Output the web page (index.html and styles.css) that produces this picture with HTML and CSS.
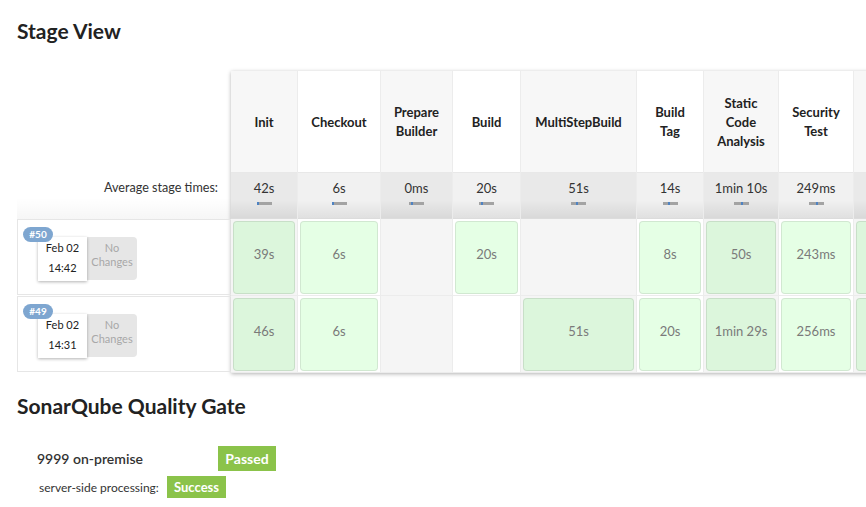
FILE: index.html
```html
<!DOCTYPE html>
<html>
<head>
<meta charset="utf-8">
<link rel="stylesheet" href="styles.css">
</head>
<body>
<div class="page">
  <h2 class="title">Stage View</h2>
  <div class="stage-view">
    <div class="labels">
      <div class="lbl-head"></div>
      <div class="lbl-avg">Average stage times:</div>
      <div class="build-row">
        <span class="badge">#50</span>
        <div class="date">Feb 02<br>14:42</div>
        <div class="changes">No<br>Changes</div>
      </div>
      <div class="build-row">
        <span class="badge">#49</span>
        <div class="date">Feb 02<br>14:31</div>
        <div class="changes">No<br>Changes</div>
      </div>
    </div>
    <div class="stages">
      <div class="col odd c-init">
        <div class="head">Init</div>
        <div class="avg">42s<span class="bar"><i style="left:0"></i></span></div>
        <div class="cell"><div class="ok">39s</div></div>
        <div class="cell"><div class="ok">46s</div></div>
      </div>
      <div class="col c-checkout">
        <div class="head">Checkout</div>
        <div class="avg">6s<span class="bar"><i style="left:0"></i></span></div>
        <div class="cell"><div class="ok">6s</div></div>
        <div class="cell"><div class="ok">6s</div></div>
      </div>
      <div class="col odd c-prepare">
        <div class="head">Prepare<br>Builder</div>
        <div class="avg">0ms<span class="bar"><i style="left:2px"></i></span></div>
        <div class="cell"></div>
        <div class="cell"></div>
      </div>
      <div class="col c-build">
        <div class="head">Build</div>
        <div class="avg">20s<span class="bar"><i style="left:2px"></i></span></div>
        <div class="cell"><div class="ok">20s</div></div>
        <div class="cell"></div>
      </div>
      <div class="col odd c-multi">
        <div class="head">MultiStepBuild</div>
        <div class="avg">51s<span class="bar"><i style="left:5px"></i></span></div>
        <div class="cell"></div>
        <div class="cell"><div class="ok">51s</div></div>
      </div>
      <div class="col c-tag">
        <div class="head">Build<br>Tag</div>
        <div class="avg">14s<span class="bar"><i style="left:5px"></i></span></div>
        <div class="cell"><div class="ok">8s</div></div>
        <div class="cell"><div class="ok">20s</div></div>
      </div>
      <div class="col odd c-static">
        <div class="head">Static<br>Code<br>Analysis</div>
        <div class="avg">1min 10s<span class="bar"><i style="left:7px"></i></span></div>
        <div class="cell"><div class="ok">50s</div></div>
        <div class="cell"><div class="ok">1min 29s</div></div>
      </div>
      <div class="col c-security">
        <div class="head">Security<br>Test</div>
        <div class="avg">249ms<span class="bar"><i style="left:7px"></i></span></div>
        <div class="cell"><div class="ok">243ms</div></div>
        <div class="cell"><div class="ok">256ms</div></div>
      </div>
      <div class="col odd c-next">
        <div class="head"></div>
        <div class="avg"></div>
        <div class="cell"><div class="ok"></div></div>
        <div class="cell"><div class="ok"></div></div>
      </div>
    </div>
  </div>
  <h2 class="title sonar-title">SonarQube Quality Gate</h2>
  <div class="qg-row">
    <span class="qg-name">9999 on-premise</span>
    <span class="qg-badge passed">Passed</span>
  </div>
  <div class="qg-row2">
    <span class="qg-label">server-side processing:</span>
    <span class="qg-badge success">Success</span>
  </div>
</div>
</body>
</html>
```

FILE: styles.css
```css
html, body {
  margin: 0;
  padding: 0;
  background: #fff;
}
body {
  font-family: Lato, "Open Sans", sans-serif;
  color: #333;
  overflow: hidden;
  width: 866px;
  height: 507px;
}
.page {
  padding-left: 17px;
  overflow: hidden;
}
.title {
  margin: 0;
  padding-top: 19px;
  font-size: 21px;
  line-height: 24px;
  font-weight: 700;
  color: #222;
}
.stage-view {
  display: flex;
  margin-top: 28px;
  width: 960px;
}
.labels {
  width: 214px;
  flex: none;
}
.lbl-head {
  height: 101px;
}
.lbl-avg {
  height: 47px;
  box-sizing: border-box;
  padding: 7px 13px 0 0;
  text-align: right;
  font-size: 12.6px;
  line-height: 17px;
  color: #333;
  background: linear-gradient(to bottom, rgba(0,0,0,0) 55%, rgba(0,0,0,0.035) 100%);
}
.build-row {
  position: relative;
  height: 76px;
  box-sizing: border-box;
  margin-bottom: 1px;
  border: 1px solid #e6e6e6;
  border-right: none;
  display: flex;
  padding: 17px 0 0 20px;
}
.badge {
  position: absolute;
  left: 5px;
  top: 7px;
  width: 30px;
  height: 15px;
  border-radius: 8px;
  background: #7ea6d0;
  color: #fff;
  font-size: 10px;
  font-weight: 700;
  line-height: 15px;
  text-align: center;
  z-index: 2;
}
.date {
  width: 49px;
  height: 44px;
  box-sizing: border-box;
  background: #fff;
  box-shadow: 0 1px 3px rgba(0,0,0,0.3);
  font-size: 11px;
  line-height: 20px;
  padding-top: 1px;
  text-align: center;
  color: #222;
  position: relative;
  z-index: 1;
}
.changes {
  width: 50px;
  height: 43px;
  box-sizing: border-box;
  background: #e6e6e6;
  border-radius: 0 4px 4px 0;
  font-size: 11px;
  line-height: 14px;
  padding-top: 4px;
  color: #a8a8a8;
  text-align: center;
}
.stages {
  display: flex;
  flex: none;
  box-shadow: 0 1px 4px rgba(0,0,0,0.3);
  background: #fff;
}
.col {
  display: flex;
  flex-direction: column;
  border-right: 1px solid #ececec;
  box-sizing: border-box;
}
.col.odd {
  background: #f5f5f5;
}
.c-init { width: 67px; }
.c-checkout { width: 83px; }
.c-prepare { width: 72px; }
.c-build { width: 68px; }
.c-multi { width: 116px; }
.c-tag { width: 67px; }
.c-static { width: 75px; }
.c-security { width: 75px; }
.c-next { width: 80px; }
.head {
  height: 101px;
  display: flex;
  align-items: center;
  justify-content: center;
  text-align: center;
  font-size: 13px;
  font-weight: 700;
  line-height: 19px;
  color: #222;
  padding: 1px 4px 0;
  box-sizing: border-box;
}
.col.odd .head {
  background: #f7f7f7;
}
.avg {
  height: 47px;
  box-sizing: border-box;
  padding-top: 7px;
  display: flex;
  flex-direction: column;
  align-items: center;
  font-size: 13px;
  line-height: 17px;
  color: #333;
  background: #f1f1f1 linear-gradient(to bottom, rgba(0,0,0,0) 60%, rgba(0,0,0,0.07) 100%);
  border-top: 1px solid #e8e8e8;
  border-bottom: 1px solid #dcdcdc;
}
.col.odd .avg {
  background: #e9e9e9 linear-gradient(to bottom, rgba(0,0,0,0) 60%, rgba(0,0,0,0.07) 100%);
}
.bar {
  position: relative;
  display: block;
  width: 15px;
  height: 3px;
  margin-top: 5px;
  background: #a3a3a3;
}
.bar i {
  position: absolute;
  top: 0;
  width: 2px;
  height: 3px;
  background: #4f83c2;
}
.cell {
  height: 77px;
  box-sizing: border-box;
  padding: 2px 2px 1px 2px;
  border-bottom: 1px solid #ececec;
}
.ok {
  height: 100%;
  box-sizing: border-box;
  border: 1px solid rgba(0,0,0,0.09);
  border-radius: 4px;
  background: rgba(0,255,0,0.1);
  font-size: 13px;
  line-height: 17px;
  padding-top: 24px;
  text-align: center;
  color: #7a7a7a;
}
.sonar-title {
  padding-top: 21px;
}
.qg-row {
  display: flex;
  align-items: center;
  margin-top: 28px;
  padding-left: 20px;
}
.qg-name {
  width: 181px;
  font-size: 14px;
  color: #333;
  font-weight: 600;
}
.qg-badge {
  display: inline-block;
  background: #8bc34a;
  color: #fff;
  font-weight: 700;
  text-align: center;
}
.passed {
  width: 58px;
  height: 25px;
  line-height: 25px;
  font-size: 14px;
}
.qg-row2 {
  display: flex;
  align-items: center;
  margin-top: 5px;
  padding-left: 22px;
}
.qg-label {
  width: 128px;
  font-size: 12px;
  color: #333;
}
.success {
  width: 59px;
  height: 22px;
  line-height: 22px;
  font-size: 13px;
}
```
